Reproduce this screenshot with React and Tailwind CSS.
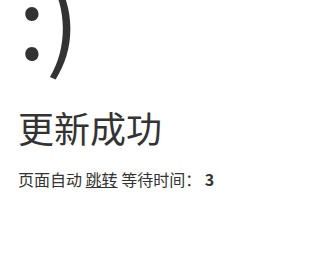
const App = () => {
  return (
    <div
      className="bg-white text-[#333] h-screen overflow-hidden pl-[18px]"
      style={{ fontFamily: '"Noto Sans CJK SC", "Liberation Sans", sans-serif' }}
    >
      <h1 className="text-[100px] leading-[120px] font-normal mt-[-43px] mb-[18px]">:)</h1>
      <p className="text-[36px] leading-[1.8em]">更新成功</p>
      <p className="pt-[7px] text-[16px]">
        页面自动 <a href="#" className="text-[#333] underline">跳转</a> 等待时间： <b>3</b>
      </p>
    </div>
  );
};
export default App;
